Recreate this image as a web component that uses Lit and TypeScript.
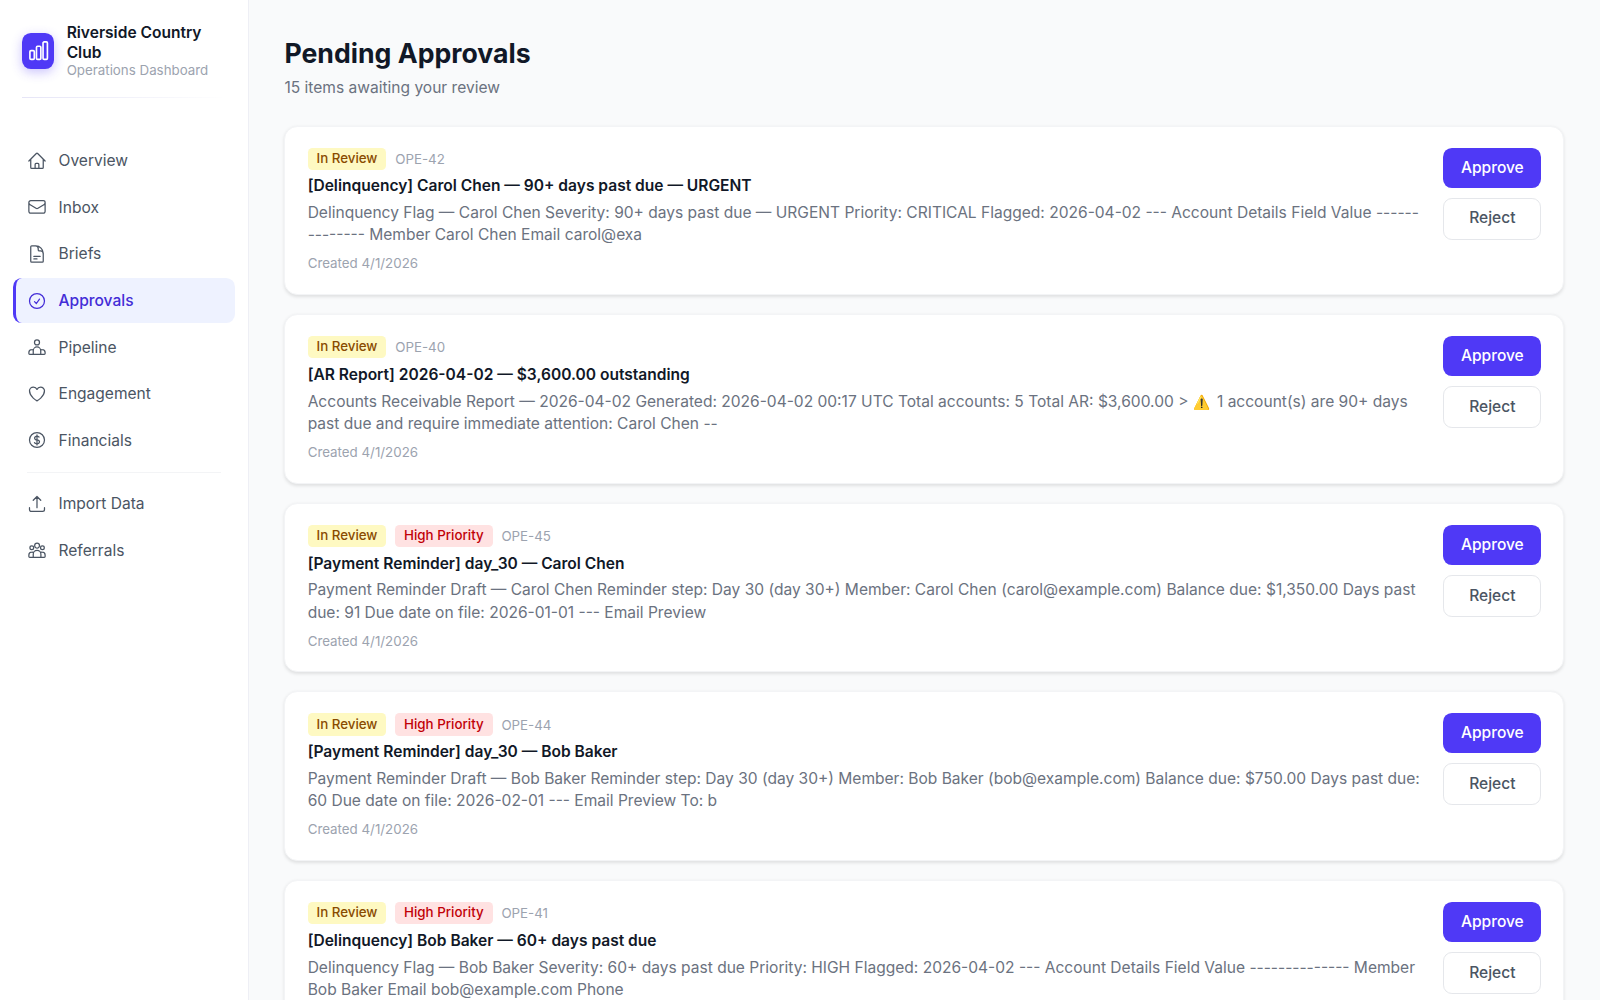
import { LitElement, html, css, svg } from "lit";
import { customElement } from "lit/decorators.js";

const icons: Record<string, string> = {
  home: "M2.25 12l8.954-8.955c.44-.439 1.152-.439 1.591 0L21.75 12M4.5 9.75v10.125c0 .621.504 1.125 1.125 1.125H9.75v-4.875c0-.621.504-1.125 1.125-1.125h2.25c.621 0 1.125.504 1.125 1.125V21h4.125c.621 0 1.125-.504 1.125-1.125V9.75M8.25 21h8.25",
  mail: "M21.75 6.75v10.5a2.25 2.25 0 01-2.25 2.25h-15a2.25 2.25 0 01-2.25-2.25V6.75m19.5 0A2.25 2.25 0 0019.5 4.5h-15a2.25 2.25 0 00-2.25 2.25m19.5 0v.243a2.25 2.25 0 01-1.07 1.916l-7.5 4.615a2.25 2.25 0 01-2.36 0L3.32 8.91a2.25 2.25 0 01-1.07-1.916V6.75",
  doc: "M19.5 14.25v-2.625a3.375 3.375 0 00-3.375-3.375h-1.5A1.125 1.125 0 0113.5 7.125v-1.5a3.375 3.375 0 00-3.375-3.375H8.25m0 12.75h7.5m-7.5 3H12M10.5 2.25H5.625c-.621 0-1.125.504-1.125 1.125v17.25c0 .621.504 1.125 1.125 1.125h12.75c.621 0 1.125-.504 1.125-1.125V11.25a9 9 0 00-9-9z",
  check: "M9 12.75L11.25 15 15 9.75M21 12a9 9 0 11-18 0 9 9 0 0118 0z",
  pipe: "M15 6.5a3 3 0 11-6 0 3 3 0 016 0zM7.5 20.75v-4.25a4.5 4.5 0 019 0v4.25M7.5 15.6a3.5 3.5 0 00-1.75-.35 3.5 3.5 0 00-3.5 3.5v1a1 1 0 001 1h17.5a1 1 0 001-1v-1a3.5 3.5 0 00-3.5-3.5 3.5 3.5 0 00-1.75.35",
  heart: "M21 8.25c0-2.485-2.099-4.5-4.688-4.5-1.935 0-3.597 1.126-4.312 2.733-.715-1.607-2.377-2.733-4.313-2.733C5.1 3.75 3 5.765 3 8.25c0 7.22 9 12 9 12s9-4.78 9-12z",
  dollar: "M12 6v12m-3-2.818l.879.659c1.171.879 3.07.879 4.242 0 1.172-.879 1.172-2.303 0-3.182C13.536 12.219 12.768 12 12 12c-.725 0-1.45-.22-2.003-.659-1.106-.879-1.106-2.303 0-3.182s2.9-.879 4.006 0l.415.33M21 12a9 9 0 11-18 0 9 9 0 0118 0z",
  upload: "M3 16.5v2.25A2.25 2.25 0 005.25 21h13.5A2.25 2.25 0 0021 18.75V16.5m-13.5-9L12 3m0 0l4.5 4.5M12 3v13.5",
  group: "M15 6.75a2.9 2.9 0 11-5.8 0 2.9 2.9 0 015.8 0zM8 9.25a2.25 2.25 0 11-4.5 0 2.25 2.25 0 014.5 0zM20.75 9.25a2.25 2.25 0 11-4.5 0 2.25 2.25 0 014.5 0zM7.5 20.75v-3.75a4.6 4.6 0 019.2 0v3.75M7.6 14.9a3.4 3.4 0 00-1.85-.4 3.5 3.5 0 00-3.5 3.5v1.75a1 1 0 001 1h17.5a1 1 0 001-1v-1.75a3.5 3.5 0 00-3.5-3.5 3.4 3.4 0 00-1.85.4",
  bars: "M3 13.125C3 12.504 3.504 12 4.125 12h2.25c.621 0 1.125.504 1.125 1.125v6.75C7.5 20.496 6.996 21 6.375 21h-2.25A1.125 1.125 0 013 19.875v-6.75zM9.75 8.625c0-.621.504-1.125 1.125-1.125h2.25c.621 0 1.125.504 1.125 1.125v11.25c0 .621-.504 1.125-1.125 1.125h-2.25a1.125 1.125 0 01-1.125-1.125V8.625zM16.5 4.125c0-.621.504-1.125 1.125-1.125h2.25C20.496 3 21 3.504 21 4.125v15.75c0 .621-.504 1.125-1.125 1.125h-2.25a1.125 1.125 0 01-1.125-1.125V4.125z",
};

const icon = (n: string) => html`<svg viewBox="0 0 24 24" fill="none" stroke="currentColor" stroke-width="1.5" stroke-linecap="round" stroke-linejoin="round">${svg`<path d=${icons[n]}></path>`}</svg>`;

const navTop = [
  ["home", "Overview"], ["mail", "Inbox"], ["doc", "Briefs"], ["check", "Approvals", true],
  ["pipe", "Pipeline"], ["heart", "Engagement"], ["dollar", "Financials"],
];
const navBottom = [["upload", "Import Data"], ["group", "Referrals"]];

const cards = [
  { high: false, id: "OPE-42", title: "[Delinquency] Carol Chen — 90+ days past due — URGENT", body: html`Delinquency Flag — Carol Chen Severity: 90+ days past due — URGENT Priority: CRITICAL Flagged: 2026-04-02 --- Account Details Field Value -------------- Member Carol Chen Email carol@exa` },
  { high: false, id: "OPE-40", title: "[AR Report] 2026-04-02 — $3,600.00 outstanding", body: html`<span>Accounts Receivable Report — 2026-04-02 Generated: 2026-04-02 00:17 UTC Total accounts: 5 Total AR: $3,600.00 &gt; </span><span class="emoji">⚠️</span><span> 1 account(s) are 90+ days </span><span>past due and require immediate attention: Carol Chen --</span>` },
  { high: true, id: "OPE-45", title: "[Payment Reminder] day_30 — Carol Chen", body: html`Payment Reminder Draft — Carol Chen Reminder step: Day 30 (day 30+) Member: Carol Chen (carol@example.com) Balance due: $1,350.00 Days past due: 91 Due date on file: 2026-01-01 --- Email Preview` },
  { high: true, id: "OPE-44", title: "[Payment Reminder] day_30 — Bob Baker", body: html`Payment Reminder Draft — Bob Baker Reminder step: Day 30 (day 30+) Member: Bob Baker (bob@example.com) Balance due: $750.00 Days past due: 60 Due date on file: 2026-02-01 --- Email Preview To: b` },
  { high: true, id: "OPE-41", title: "[Delinquency] Bob Baker — 60+ days past due", body: html`Delinquency Flag — Bob Baker Severity: 60+ days past due Priority: HIGH Flagged: 2026-04-02 --- Account Details Field Value -------------- Member Bob Baker Email bob@example.com Phone` },
];

@customElement("app-root")
export class AppRoot extends LitElement {
  static styles = css`
    :host { display: flex; zoom: 1.11111; width: 1440px; height: 900px; overflow: hidden; font-family: Inter, "Liberation Sans", sans-serif; background: #f9fafb; color: #111827; }
    .side { flex: none; box-sizing: border-box; width: 224px; background: #fff; border-right: 1px solid #eeeff5; }
    .brand { display: flex; align-items: center; gap: 11px; padding: 21px 20px 17px; position: relative; }
    .brand::after { content: ""; position: absolute; left: 20px; right: 20px; bottom: 0; height: 1px; background: linear-gradient(90deg, #e6e5f7, #f6f6fb 70%, transparent); }
    .logo { flex: none; width: 29px; height: 32px; border-radius: 8px; background: #4f39f6; color: #fff; display: flex; align-items: center; justify-content: center; box-shadow: 0 3px 10px rgba(79,57,246,.3); }
    .logo svg { width: 21px; height: 21px; stroke-width: 1.7; }
    .bname { font-size: 14px; font-weight: 600; line-height: 18px; color: #111827; }
    .bsub { font-size: 12px; line-height: 15px; margin-top: -1px; color: #9ca3af; }
    nav { padding: 36.5px 12px 0; display: flex; flex-direction: column; gap: 2px; }
    .item { display: flex; align-items: center; gap: 10px; height: 40px; padding: 0 12px 0 10px; border-radius: 8px; border-left: 3px solid transparent; font-size: 14px; color: #4b5563; font-weight: 400; }
    .item svg { width: 18px; height: 18px; flex: none; }
    .item.active { background: #eef2ff; color: #432dd7; border-left-color: #4f39f6; font-weight: 500; }
    .sep { height: 1px; background: #f3f4f6; margin: 6px 12px; }
    main { flex: 1; min-width: 0; padding: 32px 32px 0; }
    h1 { margin: 0; font-size: 24px; line-height: 32px; font-weight: 700; color: #111827; }
    .sub { font-size: 14px; line-height: 21px; margin-top: 4px; color: #6b7280; }
    .list { margin-top: 24px; display: flex; flex-direction: column; gap: 17px; }
    .card { display: flex; gap: 16px; background: #fff; border: 1px solid #f3f4f6; border-radius: 12px; padding: 19px 20px; box-shadow: 0 1px 3px rgba(0,0,0,.1); flex: none; }
    .content { flex: 1; min-width: 0; }
    .meta { display: flex; align-items: center; gap: 8px; margin-bottom: 5px; }
    .badge { font-size: 12px; font-weight: 500; line-height: 16px; padding: 2px 8px; border-radius: 4px; }
    .rev { background: #fef9c2; color: #894b00; }
    .hi { background: #ffe2e2; color: #c10007; }
    .id { font-size: 12px; color: #9ca3af; }
    .title { font-size: 14px; font-weight: 600; line-height: 20px; margin-bottom: 4px; color: #111827; }
    .body { font-size: 14px; line-height: 20px; color: #6b7280; }
    .emoji { font-size: 12.5px; margin-right: 2.5px; }
    .date { font-size: 12px; line-height: 16px; margin-top: 8px; color: #9ca3af; }
    .actions { flex: none; width: 88px; display: flex; flex-direction: column; gap: 9px; }
    button { font-family: inherit; font-size: 14px; line-height: 20px; border-radius: 8px; padding: 8px 0; font-weight: 500; }
    .ok { background: #4f39f6; color: #fff; border: none; }
    .no { background: #fff; color: #4b5563; border: 1px solid #e5e7eb; }
  `;

  private navItem(it: any[]) {
    return html`<div class="item ${it[2] ? "active" : ""}">${icon(it[0])}<span>${it[1]}</span></div>`;
  }

  render() {
    return html`
      <aside class="side">
        <div class="brand">
          <div class="logo">${icon("bars")}</div>
          <div><div class="bname">Riverside Country Club</div><div class="bsub">Operations Dashboard</div></div>
        </div>
        <nav>
          ${navTop.map((i) => this.navItem(i))}
          <div class="sep"></div>
          ${navBottom.map((i) => this.navItem(i))}
        </nav>
      </aside>
      <main>
        <h1>Pending Approvals</h1>
        <div class="sub">15 items awaiting your review</div>
        <div class="list">
          ${cards.map((c) => html`
            <section class="card">
              <div class="content">
                <div class="meta">
                  <span class="badge rev">In Review</span>
                  ${c.high ? html`<span class="badge hi">High Priority</span>` : ""}
                  <span class="id">${c.id}</span>
                </div>
                <div class="title">${c.title}</div>
                <div class="body">${c.body}</div>
                <div class="date">Created 4/1/2026</div>
              </div>
              <div class="actions">
                <button class="ok">Approve</button>
                <button class="no">Reject</button>
              </div>
            </section>`)}
        </div>
      </main>`;
  }
}
